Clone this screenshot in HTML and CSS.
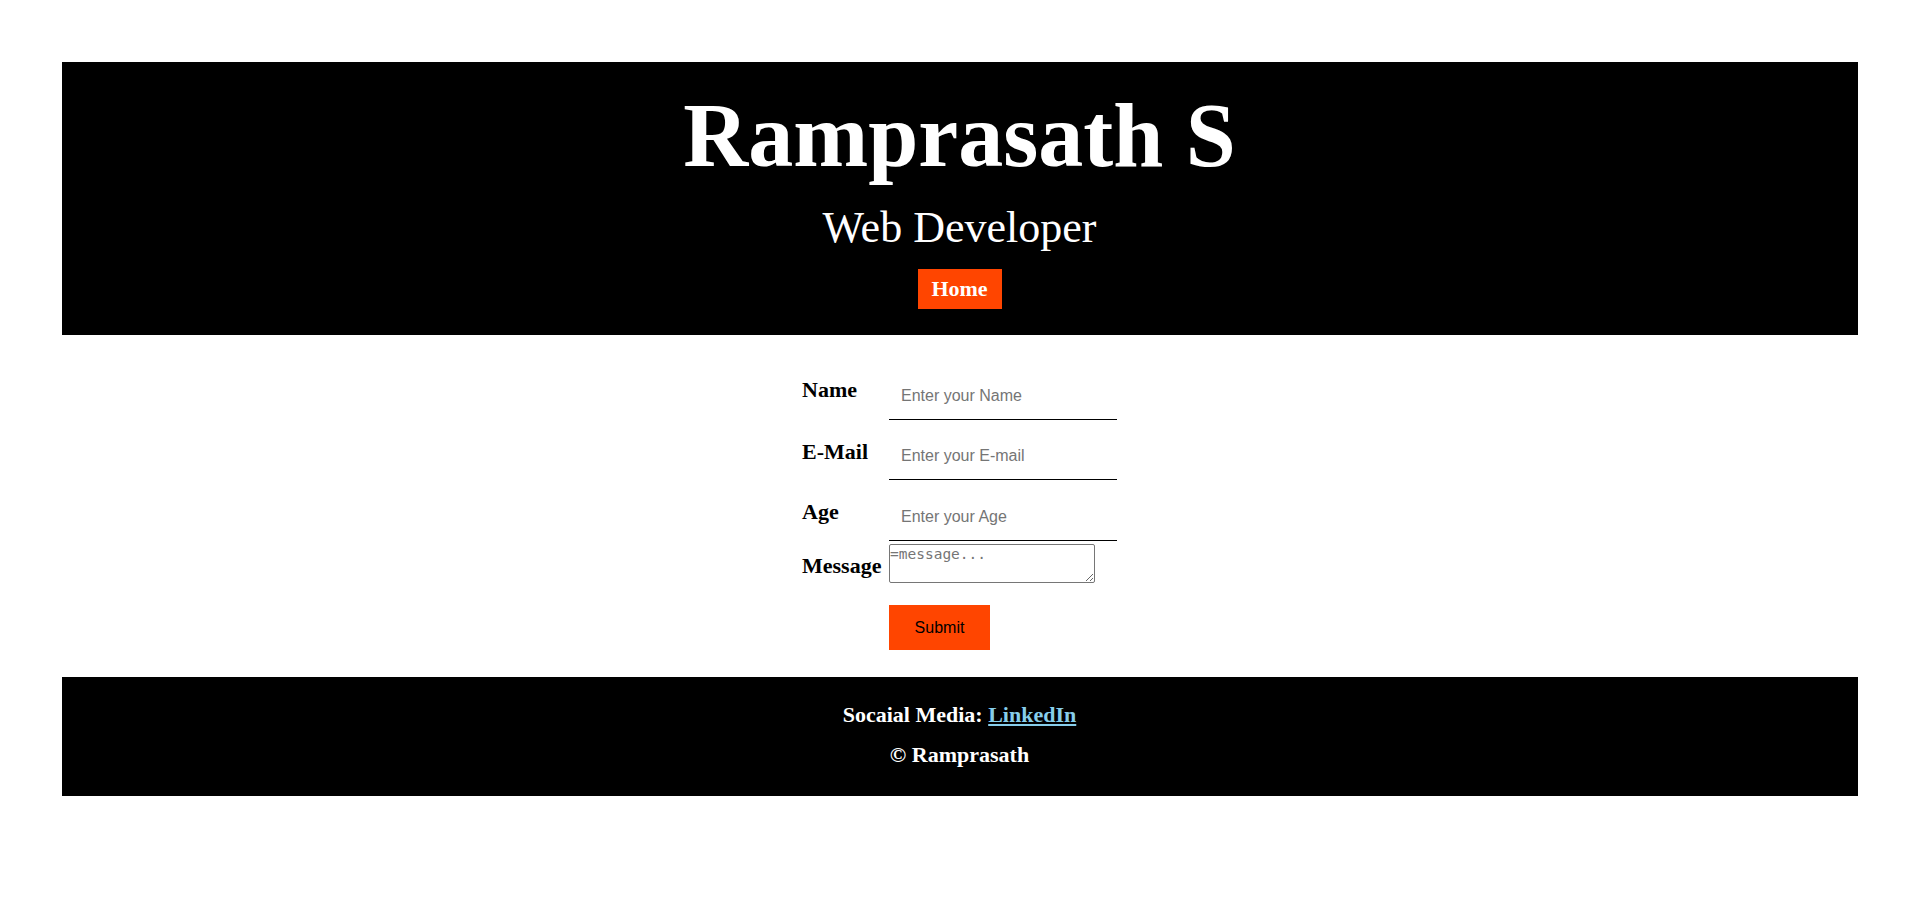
FILE: index.html
```html
<!DOCTYPE html>
<html lang="en">
<head>
<meta charset="utf-8">
<title>Ramprasath S</title>
<link rel="stylesheet" href="styles.css">
</head>
<body>
<header class="site-header">
  <h1 class="title">Ramprasath S</h1>
  <h2 class="subtitle">Web Developer</h2>
  <nav class="nav"><a class="nav-link" href="#">Home</a></nav>
</header>
<main class="content">
  <form class="contact-form">
    <div class="form-row">
      <label class="lbl lbl-name" for="name">Name</label>
      <input class="field" id="name" type="text" placeholder="Enter your Name">
    </div>
    <div class="form-row">
      <label class="lbl lbl-mail" for="mail">E-Mail</label>
      <input class="field" id="mail" type="email" placeholder="Enter your E-mail">
    </div>
    <div class="form-row row-age">
      <label class="lbl lbl-age" for="age">Age</label>
      <input class="field" id="age" type="text" placeholder="Enter your Age">
    </div>
    <div class="form-row row-tight">
      <label class="lbl lbl-msg" for="msg">Message</label>
      <textarea class="msg" id="msg" placeholder="=message..."></textarea>
    </div>
    <div class="form-row row-submit">
      <span class="lbl"></span>
      <button class="submit" type="button">Submit</button>
    </div>
  </form>
</main>
<footer class="site-footer">
  <p class="foot-line">Socaial Media: <a class="foot-link" href="#">LinkedIn</a></p>
  <p class="foot-line foot-copy">© Ramprasath</p>
</footer>
</body>
</html>
```

FILE: styles.css
```css
html, body {
  margin: 0;
  padding: 0;
  background: #ffffff;
}

body {
  font-family: "Liberation Serif", "Times New Roman", serif;
  color: #000;
}

.site-header {
  width: 1796px;
  margin: 62px auto 0;
  background: #000;
  color: #fff;
  text-align: center;
  padding: 29px 0 26px;
  box-sizing: border-box;
}

.title {
  margin: 0;
  font-size: 90px;
  line-height: 90px;
  font-weight: bold;
}

.subtitle {
  margin: 22px 0 0;
  font-size: 44px;
  line-height: 50px;
  font-weight: normal;
}

.nav {
  margin-top: 16px;
  display: flex;
  justify-content: center;
}

.nav-link {
  display: block;
  background: #ff4500;
  color: #fff;
  text-decoration: none;
  font-size: 22px;
  font-weight: bold;
  line-height: 40px;
  width: 84px;
  text-align: center;
}

.content {
  display: flex;
  justify-content: center;
  margin-top: 42px;
}

.contact-form {
  display: flex;
  flex-direction: column;
  width: 315px;
}

.form-row {
  display: flex;
  align-items: flex-start;
}

.form-row + .form-row {
  margin-top: 17px;
}

.form-row.row-age {
  margin-top: 18px;
}

.form-row.row-tight {
  margin-top: 3px;
}

.form-row.row-submit {
  margin-top: 22px;
}

.lbl {
  width: 87px;
  flex: none;
  font-size: 22px;
  line-height: 24px;
  font-weight: bold;
  white-space: nowrap;
}

.lbl-name { padding-top: 1px; }
.lbl-mail { padding-top: 3px; }
.lbl-age { padding-top: 2px; }
.lbl-msg { padding-top: 10px; }

.field {
  width: 228px;
  box-sizing: border-box;
  border: none;
  border-bottom: 1px solid #000;
  outline: none;
  background: transparent;
  padding: 10px 12px 14px;
  margin: 0;
  font-family: "Liberation Sans", Arial, sans-serif;
  font-size: 16px;
  line-height: 18px;
  height: 43px;
}

.field::placeholder,
.msg::placeholder {
  color: #757575;
  opacity: 1;
}

.msg {
  width: 206px;
  height: 39px;
  box-sizing: border-box;
  margin: 0;
  border: 1px solid #767676;
  border-radius: 2px;
  padding: 1px 0;
  font-family: "DejaVu Sans Mono", "Liberation Mono", monospace;
  font-size: 14.5px;
  line-height: 17px;
}

.submit {
  width: 101px;
  height: 45px;
  border: none;
  background: #ff4500;
  color: #000;
  font-family: "Liberation Sans", Arial, sans-serif;
  font-size: 16px;
  padding: 0;
  margin: 0;
}

.site-footer {
  width: 1796px;
  margin: 27px auto 0;
  background: #000;
  color: #fff;
  text-align: center;
  padding: 25px 0 28px;
  box-sizing: border-box;
}

.foot-line {
  margin: 0;
  font-size: 22px;
  line-height: 26px;
  font-weight: bold;
}

.foot-copy {
  margin-top: 14px;
}

.foot-link {
  color: #87ceeb;
  text-decoration: underline;
}
```
